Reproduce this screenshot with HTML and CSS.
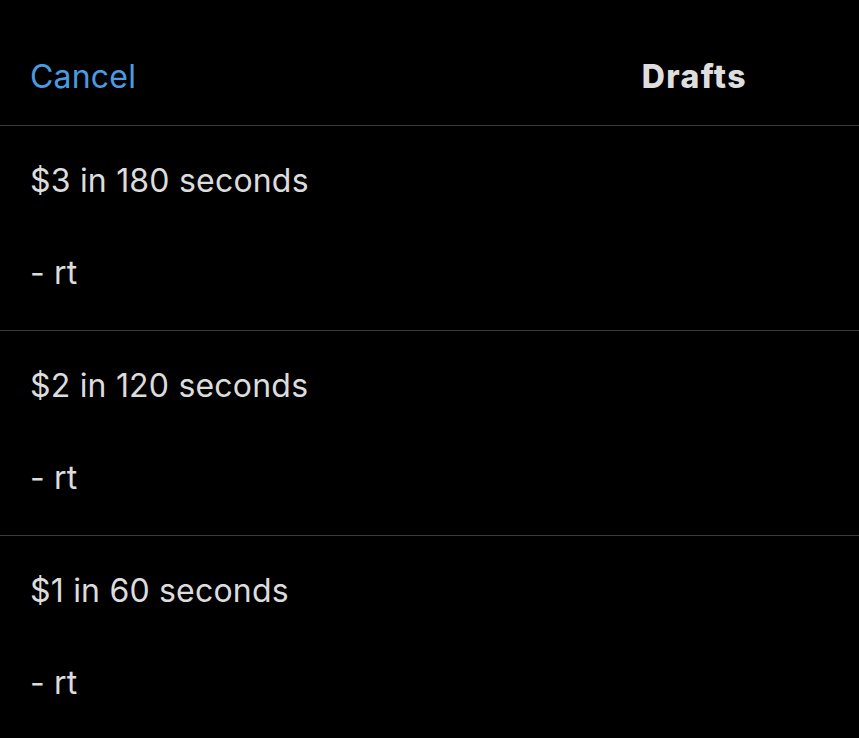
FILE: index.html
```html
<!DOCTYPE html>
<html lang="en">
<head>
  <meta charset="UTF-8">
  <meta name="viewport" content="width=device-width, initial-scale=1.0">
  <title>Drafts</title>
  <link rel="stylesheet" href="styles.css">
</head>
<body>
<div class="nav">
  <a class="nav-cancel" href="#">Cancel</a>
  <div class="nav-title">Drafts</div>
</div>
<div class="draft-list">
  <div class="draft-item">
    <div class="draft-line">$3 in 180 seconds</div>
    <div class="draft-line">- rt</div>
  </div>
  <div class="draft-item">
    <div class="draft-line">$2 in 120 seconds</div>
    <div class="draft-line">- rt</div>
  </div>
  <div class="draft-item">
    <div class="draft-line">$1 in 60 seconds</div>
    <div class="draft-line">- rt</div>
  </div>
</div>
</body>
</html>
```

FILE: styles.css
```css
body {
  margin: 0;
  padding: 0;
  background: #000;
  color: #dcdcdc;
  font-family: 'Inter', 'Roboto', sans-serif;
  font-size: 32px;
  letter-spacing: 0.2px;
  overflow: hidden;
}
.nav {
  display: flex;
  justify-content: space-between;
  align-items: flex-start;
  height: 126px;
  box-sizing: border-box;
  padding: 58px 112px 0 30px;
  border-bottom: 1px solid #3a3a3a;
  line-height: 1.2;
}
.nav-cancel {
  color: #4a9be0;
  text-decoration: none;
}
.nav-title {
  font-weight: 800;
  letter-spacing: 1.4px;
  color: #dedede;
}
.draft-item {
  padding: 9px 30px 11px;
  border-bottom: 1px solid #3a3a3a;
  line-height: 92px;
}
```
